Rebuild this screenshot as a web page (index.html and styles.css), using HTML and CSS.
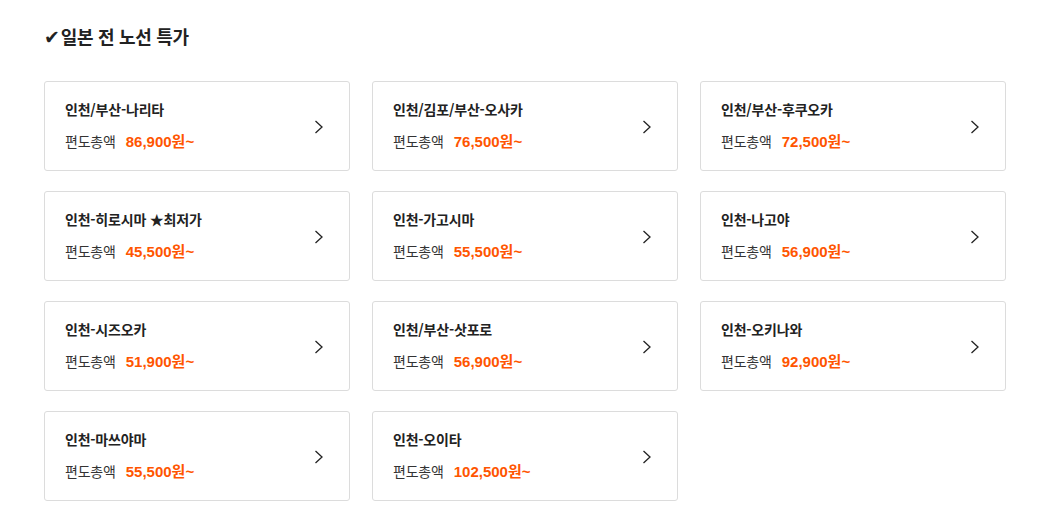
FILE: index.html
```html
<!DOCTYPE html>
<html lang="ko">
<head>
<meta charset="utf-8">
<link rel="stylesheet" href="styles.css">
</head>
<body>
<section class="wrap">
  <h2 class="title"><span class="check">✔</span>일본 전 노선 특가</h2>
  <div class="grid">
    <a class="card"><div class="info"><div class="route">인천/부산-나리타</div><div class="price"><span class="lbl">편도총액</span><span class="amt">86,900원~</span></div></div><svg class="chev" viewBox="0 0 10 14"><path d="M1.5 1 L8 7 L1.5 13"/></svg></a>
    <a class="card"><div class="info"><div class="route">인천/김포/부산-오사카</div><div class="price"><span class="lbl">편도총액</span><span class="amt">76,500원~</span></div></div><svg class="chev" viewBox="0 0 10 14"><path d="M1.5 1 L8 7 L1.5 13"/></svg></a>
    <a class="card"><div class="info"><div class="route">인천/부산-후쿠오카</div><div class="price"><span class="lbl">편도총액</span><span class="amt">72,500원~</span></div></div><svg class="chev" viewBox="0 0 10 14"><path d="M1.5 1 L8 7 L1.5 13"/></svg></a>
    <a class="card"><div class="info"><div class="route">인천-히로시마 ★최저가</div><div class="price"><span class="lbl">편도총액</span><span class="amt">45,500원~</span></div></div><svg class="chev" viewBox="0 0 10 14"><path d="M1.5 1 L8 7 L1.5 13"/></svg></a>
    <a class="card"><div class="info"><div class="route">인천-가고시마</div><div class="price"><span class="lbl">편도총액</span><span class="amt">55,500원~</span></div></div><svg class="chev" viewBox="0 0 10 14"><path d="M1.5 1 L8 7 L1.5 13"/></svg></a>
    <a class="card"><div class="info"><div class="route">인천-나고야</div><div class="price"><span class="lbl">편도총액</span><span class="amt">56,900원~</span></div></div><svg class="chev" viewBox="0 0 10 14"><path d="M1.5 1 L8 7 L1.5 13"/></svg></a>
    <a class="card"><div class="info"><div class="route">인천-시즈오카</div><div class="price"><span class="lbl">편도총액</span><span class="amt">51,900원~</span></div></div><svg class="chev" viewBox="0 0 10 14"><path d="M1.5 1 L8 7 L1.5 13"/></svg></a>
    <a class="card"><div class="info"><div class="route">인천/부산-삿포로</div><div class="price"><span class="lbl">편도총액</span><span class="amt">56,900원~</span></div></div><svg class="chev" viewBox="0 0 10 14"><path d="M1.5 1 L8 7 L1.5 13"/></svg></a>
    <a class="card"><div class="info"><div class="route">인천-오키나와</div><div class="price"><span class="lbl">편도총액</span><span class="amt">92,900원~</span></div></div><svg class="chev" viewBox="0 0 10 14"><path d="M1.5 1 L8 7 L1.5 13"/></svg></a>
    <a class="card"><div class="info"><div class="route">인천-마쓰야마</div><div class="price"><span class="lbl">편도총액</span><span class="amt">55,500원~</span></div></div><svg class="chev" viewBox="0 0 10 14"><path d="M1.5 1 L8 7 L1.5 13"/></svg></a>
    <a class="card"><div class="info"><div class="route">인천-오이타</div><div class="price"><span class="lbl">편도총액</span><span class="amt">102,500원~</span></div></div><svg class="chev" viewBox="0 0 10 14"><path d="M1.5 1 L8 7 L1.5 13"/></svg></a>
  </div>
</section>
</body>
</html>
```
FILE: styles.css
```css
* { box-sizing: border-box; }
html, body { margin: 0; padding: 0; background: #fff; }
body {
  font-family: "Noto Sans CJK KR", "Noto Sans", "Liberation Sans", sans-serif;
  color: #222;
}
.wrap { padding: 22px 32px 0 44px; }
.title {
  margin: 0;
  height: 28px;
  font-size: 18px;
  line-height: 28px;
  font-weight: 700;
  color: #222;
  letter-spacing: -0.3px;
}
.check {
  font-family: "DejaVu Sans", sans-serif;
  font-size: 19px;
  line-height: 1;
  margin-right: 1px;
}
.grid {
  margin-top: 31px;
  display: grid;
  grid-template-columns: repeat(3, 306px);
  column-gap: 22px;
  row-gap: 20px;
}
.card {
  height: 90px;
  border: 1px solid #dcdcdc;
  border-radius: 3px;
  padding: 17px 25px 0 20px;
  display: flex;
  justify-content: space-between;
  align-items: flex-start;
}
.info { display: flex; flex-direction: column; gap: 12px; }
.route {
  font-size: 14px;
  line-height: 20px;
  font-weight: 700;
  color: #222;
  letter-spacing: -0.2px;
}
.price { display: flex; align-items: baseline; gap: 10px; line-height: 20px; }
.lbl { font-size: 14px; color: #333; letter-spacing: -0.2px; }
.amt {
  font-family: "Liberation Sans", "Noto Sans CJK KR", sans-serif;
  font-size: 15px;
  font-weight: 700;
  color: #ff5500;
  letter-spacing: 0;
}
.chev {
  width: 10px;
  height: 14px;
  margin-top: 21px;
  fill: none;
  stroke: #222;
  stroke-width: 1.3;
}
```
